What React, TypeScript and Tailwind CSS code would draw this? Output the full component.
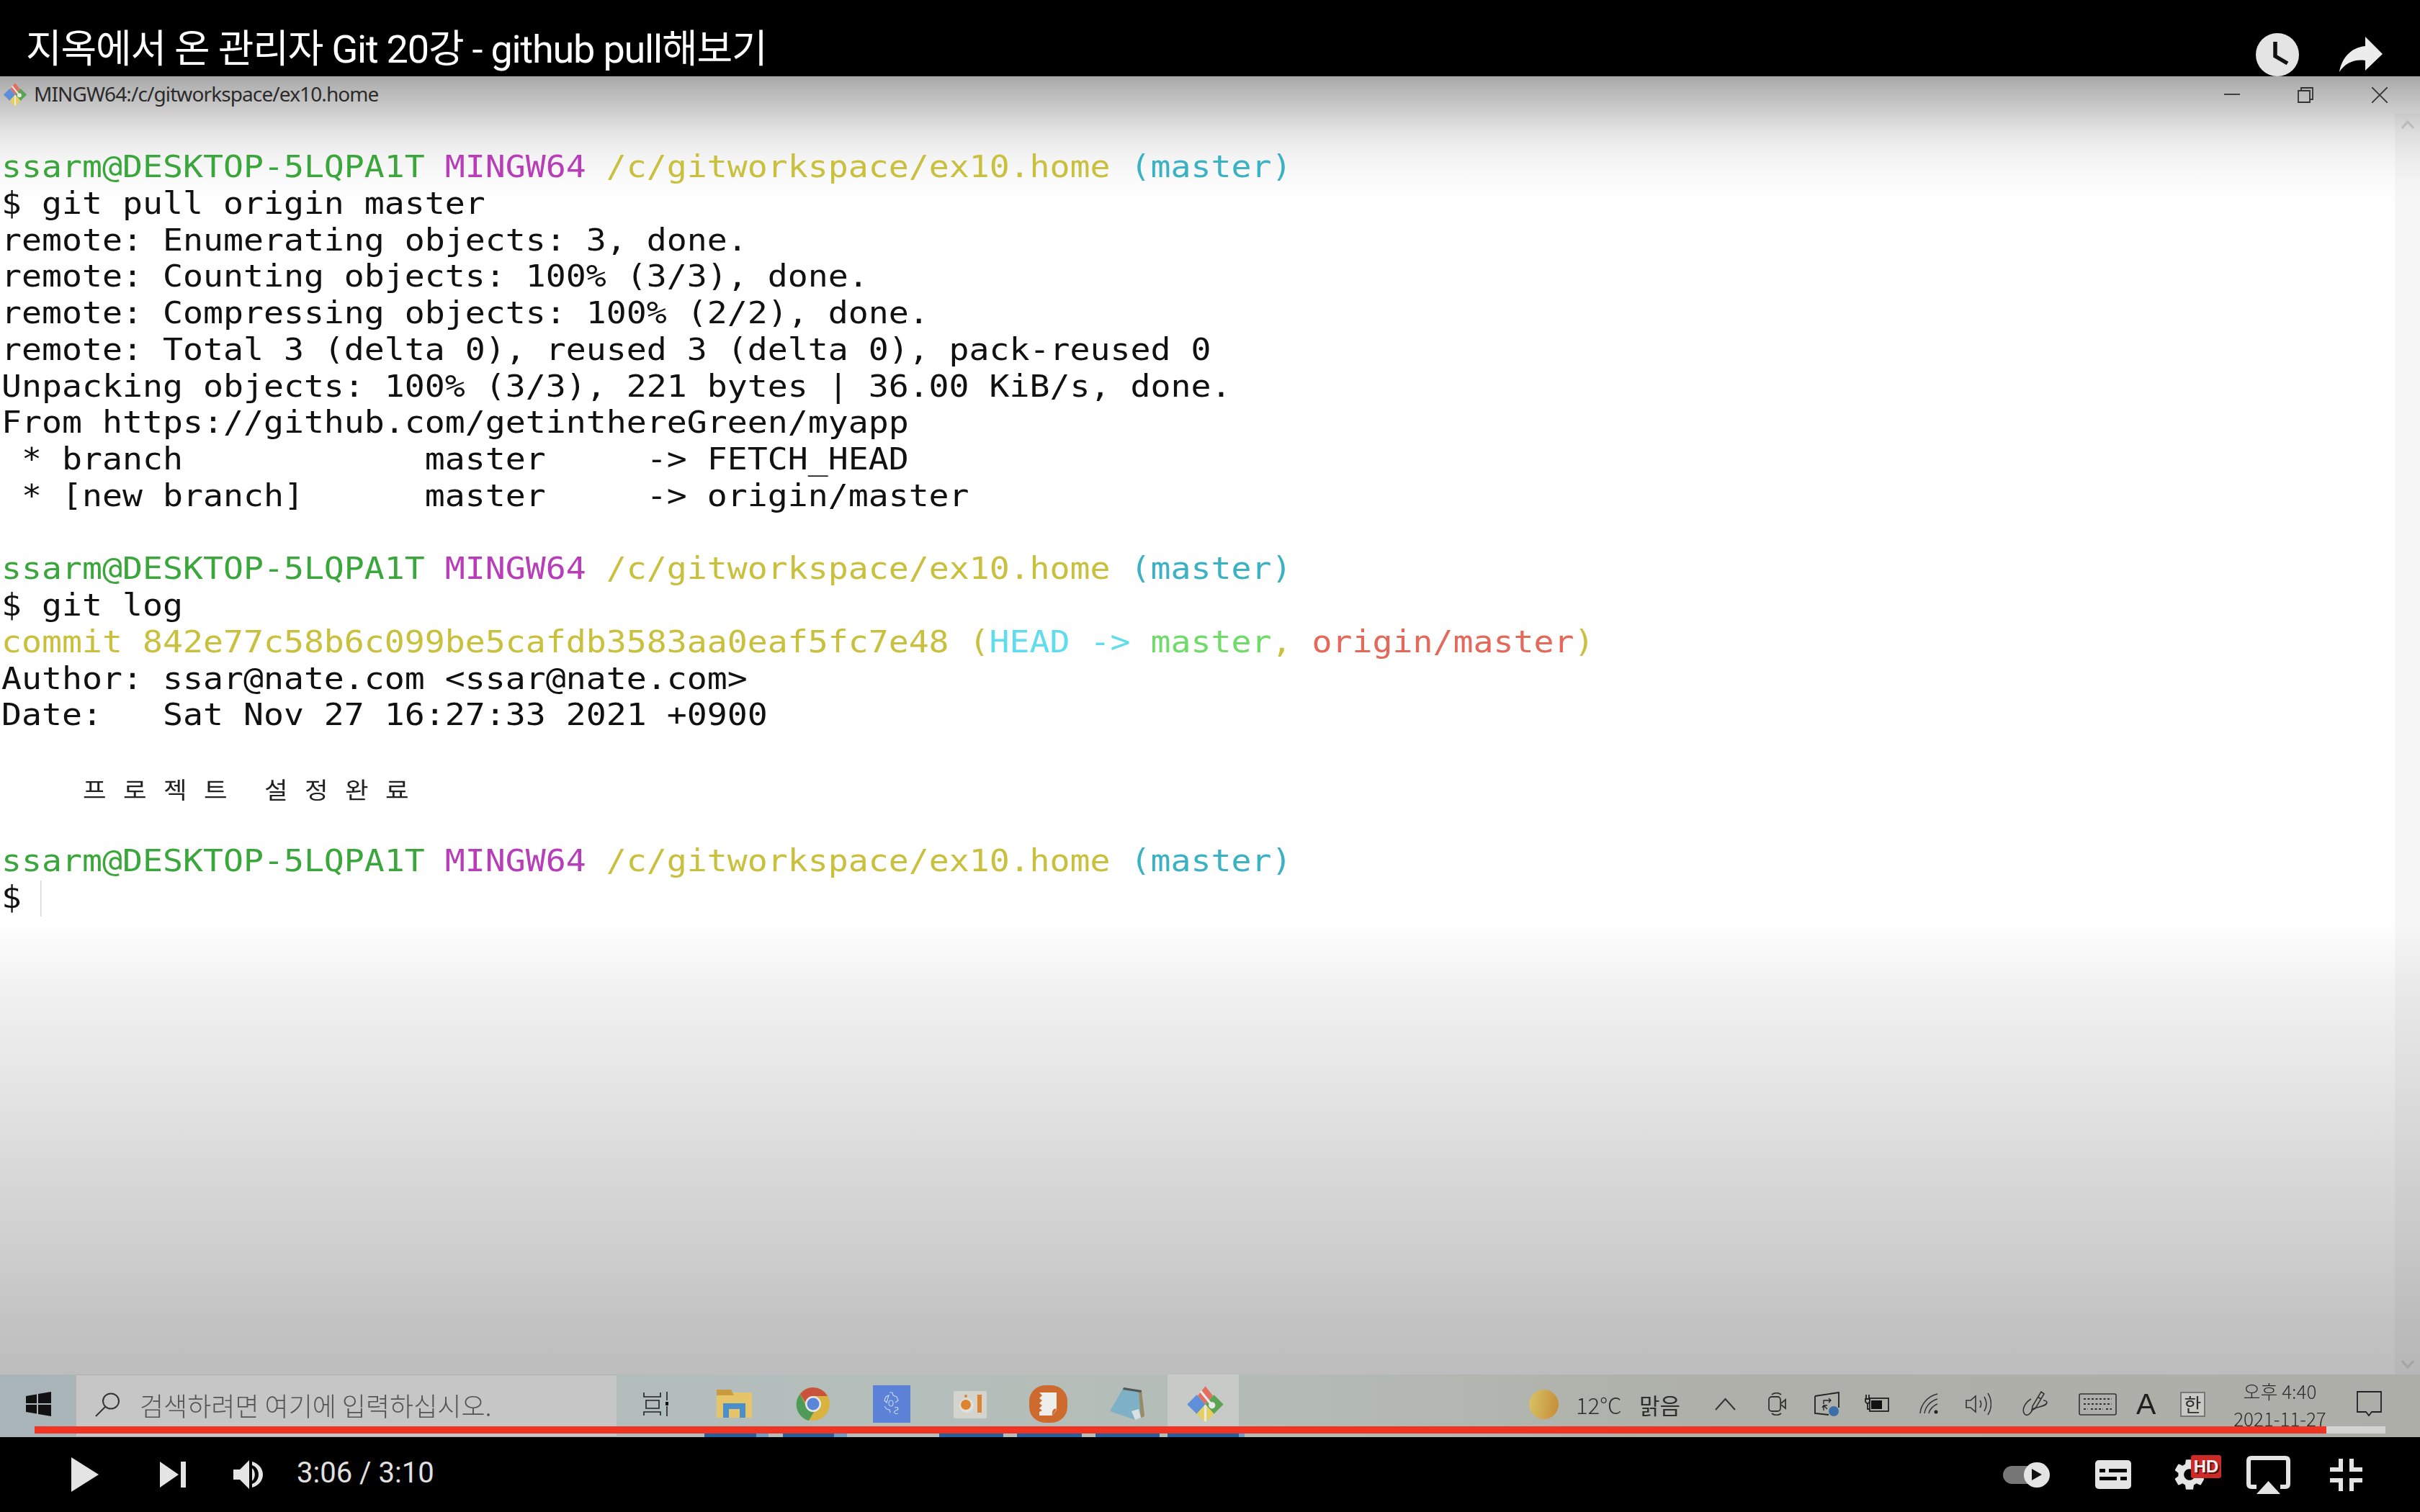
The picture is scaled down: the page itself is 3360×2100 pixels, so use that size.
const mono = "font-['DejaVu_Sans_Mono','Noto_Sans_CJK_KR',monospace]";

const GREEN = "text-[#3aa63c]";
const PURPLE = "text-[#b83db8]";
const YELLOW = "text-[#c9c03e]";
const CYAN = "text-[#3bb2c4]";

const Prompt = () => (
  <div className="h-[50.75px] whitespace-pre">
    <span className={GREEN}>ssarm@DESKTOP-5LQPA1T</span> <span className={PURPLE}>MINGW64</span>{" "}
    <span className={YELLOW}>/c/gitworkspace/ex10.home</span> <span className={CYAN}>(master)</span>
  </div>
);

const Line = ({ text }: { text: string }) => <div className="h-[50.75px] whitespace-pre">{text}</div>;

const GitLogo = ({ className }: { className: string }) => (
  <svg viewBox="0 0 40 40" className={className}>
    <path d="M20 1 L28 11 L20 20 L12 11 Z" fill="#e0705f" />
    <path d="M1 20 L11 10 L20 20 L11 30 Z" fill="#5f8fd8" />
    <path d="M39 20 L29 10 L20 20 L29 30 Z" fill="#5aa454" />
    <path d="M20 39 L29 30 L20 20 L11 30 Z" fill="#e6cf5c" />
    <path d="M15 6 L27 21 M20 21 L20 38" stroke="#e8e8e8" strokeWidth="2.5" fill="none" />
    <circle cx="27" cy="21" r="3.5" fill="#e8e8e8" />
  </svg>
);

const WinLogo = () => (
  <svg viewBox="0 0 35 34" className="w-[35px] h-[34px]" fill="#111">
    <path d="M0 6 L15 3.5 V16 H0 Z M17 3 L35 0 V16 H17 Z M0 18 H15 V30.5 L0 28 Z M17 18 H35 V34 L17 31 Z" />
  </svg>
);

const TaskView = () => (
  <svg viewBox="0 0 36 34" className="w-[36px] h-[34px]" fill="none" stroke="#222" strokeWidth="1.6">
    <path d="M1 1 V7 H24 V1 M4 12 H22 V23 H4 Z M1 33 V28 H24 V33 M33 0 V12 M33 20 V34" />
    <rect x="31" y="14" width="4" height="5" fill="#111" stroke="none" />
  </svg>
);

const Folder = () => (
  <svg viewBox="0 0 49 42" className="w-[49px] h-[42px]">
    <path d="M0 1 H18 L22 5 H49 V40 H0 Z" fill="#e6c56a" />
    <path d="M0 1 H20 L24 9 H0 Z" fill="#c99a3e" />
    <path d="M9 40 V20 H40 V40 H32 V28 H17 V40 Z" fill="#4a8fc9" />
  </svg>
);

const Chrome = () => (
  <svg viewBox="0 0 48 48" className="w-[48px] h-[48px]">
    <circle cx="24" cy="24" r="23" fill="#d9b23f" />
    <path d="M24 1 A23 23 0 0 1 44 13 H24 A11 11 0 0 0 13 22 L6 10 A23 23 0 0 1 24 1 Z" fill="#c9523d" />
    <path d="M6 10 L15 29 A11 11 0 0 0 25 35 L18 47 A23 23 0 0 1 6 10 Z" fill="#4f9a57" />
    <circle cx="24" cy="24" r="11" fill="#e4e8ea" />
    <circle cx="24" cy="24" r="8.5" fill="#5a86d8" />
  </svg>
);

const BlueGear = () => (
  <div className="w-[52px] h-[52px] bg-[#5b82d6] flex items-center justify-center">
    <svg viewBox="0 0 24 34" className="w-[24px] h-[34px]" fill="none" stroke="#c4d4f2" strokeWidth="1.2">
      <path d="M9 1 H13 L14 5 L19 7 L21 12 L17 15 M5 15 L2 12 L4 7 L8 5 Z" />
      <ellipse cx="11" cy="16" rx="3" ry="4" />
      <path d="M2 20 L5 24 L9 25 L10 29 M16 22 C22 20 22 25 18 26 C14 27 15 32 21 30" />
    </svg>
  </div>
);

const WhiteApp = () => (
  <svg viewBox="0 0 46 40" className="w-[46px] h-[40px]">
    <rect x="0" y="2" width="46" height="38" rx="2" fill="#d4d4cf" />
    <circle cx="18" cy="22" r="10" fill="#e0e0dc" />
    <circle cx="17" cy="21" r="7" fill="#dc8430" />
    <rect x="33" y="7" width="6" height="25" fill="#dc8430" />
    <circle cx="17" cy="9" r="2" fill="#dc8430" />
  </svg>
);

const OrangeApp = () => (
  <svg viewBox="0 0 53 52" className="w-[53px] h-[52px]">
    <rect width="53" height="52" rx="22" fill="#cf6a2e" />
    <path d="M14 10 H38 V34 L32 42 H14 V37 L18 35 L14 32 L18 28 L14 25 L18 21 L14 18 L18 14 Z" fill="#eeeeea" />
    <path d="M38 33 C34 31 31 36 32 42 Z" fill="#cf6a2e" />
  </svg>
);

const Notepad = () => (
  <svg viewBox="0 0 48 46" className="w-[48px] h-[46px]">
    <path d="M19 0 L44 4 L48 40 L35 45 L0 33 Z" fill="#7eb0c6" />
    <path d="M44 4 L48 40 L43 42 L40 6 Z" fill="#9c8a64" />
    <path d="M35 45 L43 42 L40 30 L30 33 Z" fill="#d8e0e2" />
    <path d="M19 0 L44 4 L43 7 L18 3 Z" fill="#555" />
  </svg>
);

const Search = () => (
  <svg viewBox="0 0 36 34" className="w-[36px] h-[34px]" fill="none" stroke="#333" strokeWidth="2">
    <ellipse cx="23" cy="12" rx="11" ry="10.5" />
    <path d="M15 20 L2 33" />
  </svg>
);

const tasks: { icon: React.ReactNode; lit?: boolean; bar?: [number, number, number] }[] = [
  { icon: <TaskView /> },
  { icon: <Folder />, bar: [13, 72, 17] },
  { icon: <Chrome />, bar: [13, 71, 18] },
  { icon: <BlueGear /> },
  { icon: <WhiteApp />, bar: [12, 89, 0] },
  { icon: <OrangeApp />, bar: [11, 90, 0] },
  { icon: <Notepad />, bar: [11, 89, 0] },
  { icon: <GitLogo className="w-[53px] h-[53px]" />, lit: true, bar: [2, 99, 8] },
];

const TaskSlot = ({ icon, lit, bar }: (typeof tasks)[number]) => (
  <div
    className={`w-[109px] flex flex-col ${
      lit ? "bg-[linear-gradient(to_right,transparent_2px,#c8cac8_2px,#c8cac8_101px,transparent_101px)]" : ""
    }`}
  >
    <div className="flex-1 flex items-center justify-center">{icon}</div>
    <div className="h-[5px] flex">
      {bar && (
        <>
          <div className="h-full bg-[#255f9e]" style={{ marginLeft: bar[0], width: bar[1] }} />
          <div className="h-full bg-[#6d9cc4]" style={{ width: bar[2] }} />
        </>
      )}
    </div>
  </div>
);

const Tray = () => (
  <div className="flex items-center h-[82px] ml-[395px] text-[#2e2e2c] font-['Noto_Sans_CJK_KR',sans-serif]">
    <div className="w-[41px] h-[41px] rounded-full bg-[linear-gradient(100deg,#d8c468,#c68a34)]" />
    <div className="ml-[24px] w-[65px] text-[31px] leading-none whitespace-nowrap font-light">12°C</div>
    <div className="ml-[23px] w-[59px] text-[31px] leading-none whitespace-nowrap">맑음</div>
    <svg viewBox="0 0 29 18" className="ml-[46px] w-[29px] h-[18px]" fill="none" stroke="#333" strokeWidth="2">
      <path d="M1 17 L14.5 2 L28 17" />
    </svg>
    <svg viewBox="0 0 25 32" className="ml-[45px] w-[25px] h-[32px]" fill="none" stroke="#333" strokeWidth="1.8">
      <path d="M5 3 C9 0 14 0 18 3 M5 29 C9 32 14 32 18 29" />
      <rect x="1" y="6" width="16" height="20" rx="4" />
      <path d="M18 15 L24 10 V22 L18 17" />
    </svg>
    <svg viewBox="0 0 35 34" className="ml-[39px] w-[35px] h-[34px]" fill="none" stroke="#222" strokeWidth="1.8">
      <path d="M1 6 L34 1 V22 M1 6 V30 L20 32" />
      <path d="M13 17 V12 H23 M20 9 L23 12 L20 15 M18 19 H13 V26 M11 22 L13 19 M13 19 L18 24" strokeWidth="1.3" />
      <circle cx="27" cy="27" r="7" fill="#3d6ea8" stroke="none" />
    </svg>
    <svg viewBox="0 0 35 26" className="ml-[35px] w-[35px] h-[26px]" fill="none" stroke="#222" strokeWidth="1.8">
      <rect x="7" y="5" width="26" height="18" />
      <rect x="9" y="8" width="15" height="12" fill="#111" stroke="none" />
      <path d="M2 0 V6 M6 0 V6 M1 6 H7 V10 L4 13 L1 10 Z M4 13 V20 H7" />
    </svg>
    <svg viewBox="0 0 26 30" className="ml-[41px] w-[26px] h-[30px]" fill="none" stroke="#333" strokeWidth="1.5">
      <path d="M1 28 C2 15 12 4 25 1 M7 28 C8 19 15 11 25 8 M13 28 C14 23 19 17 25 15" />
      <circle cx="23" cy="26" r="2.5" fill="#222" stroke="none" />
    </svg>
    <svg viewBox="0 0 36 32" className="ml-[38px] w-[36px] h-[32px]" fill="none" stroke="#333" strokeWidth="1.6">
      <path d="M1 11 H7 L14 5 V27 L7 21 H1 Z M20 11 C22 14 22 18 20 21 M26 6 C30 12 30 20 26 26 M31 1 C37 10 37 22 31 31" />
    </svg>
    <svg viewBox="0 0 36 36" className="ml-[42px] w-[36px] h-[36px]" fill="none" stroke="#333" strokeWidth="1.6">
      <path d="M27 1 L31 4 L19 24 L14 27 L15 21 Z M22 8 L27 11" />
      <path d="M13 11 C3 17 0 27 4 32 C8 36 14 30 15 25 C20 22 34 22 35 16 C35 14 32 13 30 13" />
    </svg>
    <svg viewBox="0 0 53 31" className="ml-[43px] w-[53px] h-[31px]" fill="none" stroke="#333" strokeWidth="1.6">
      <rect x="1" y="1" width="51" height="29" rx="2" />
      <path d="M7 8 H46 M7 15 H46 M7 22 H13 M17 22 H34 M38 22 H46" strokeDasharray="3 2.5" strokeWidth="2" />
    </svg>
    <div className="ml-[27px] w-[28px] text-[41px] leading-none font-['Liberation_Sans',sans-serif] text-[#1f1f1d]">A</div>
    <div className="ml-[33px] w-[35px] h-[35px] border-2 border-[#777] bg-[#c9c9c4] flex items-center justify-center text-[26px] leading-none">
      한
    </div>
    <div className="ml-[38px] w-[131px] flex flex-col items-center self-start pt-[8px]">
      <div className="text-[26px] leading-[30px] whitespace-nowrap font-light">오후 4:40</div>
      <div className="mt-[8px] text-[26px] leading-[30px] whitespace-nowrap font-light">2021-11-27</div>
    </div>
    <svg viewBox="0 0 35 36" className="ml-[41px] w-[35px] h-[36px]" fill="none" stroke="#222" strokeWidth="1.8">
      <path d="M1 1 H34 V29 H21 L17 34 L13 29 H1 Z" />
    </svg>
  </div>
);

const gearPath =
  "M19.14 12.94c.04-.3.06-.61.06-.94 0-.32-.02-.64-.07-.94l2.03-1.58c.18-.14.23-.41.12-.61l-1.92-3.32c-.12-.22-.37-.29-.59-.22l-2.39.96c-.5-.38-1.03-.7-1.62-.94l-.36-2.54c-.04-.24-.24-.41-.48-.41h-3.84c-.24 0-.43.17-.47.41l-.36 2.54c-.59.24-1.13.57-1.62.94l-2.39-.96c-.22-.08-.47 0-.59.22L2.74 8.87c-.12.21-.08.47.12.61l2.03 1.58c-.05.3-.09.63-.09.94s.02.64.07.94l-2.03 1.58c-.18.14-.23.41-.12.61l1.92 3.32c.12.22.37.29.59.22l2.39-.96c.5.38 1.03.7 1.62.94l.36 2.54c.05.24.24.41.48.41h3.84c.24 0 .44-.17.47-.41l.36-2.54c.59-.24 1.13-.56 1.62-.94l2.39.96c.22.08.47 0 .59-.22l1.92-3.32c.12-.22.07-.47-.12-.61l-2.01-1.58zM12 15.6c-1.98 0-3.6-1.62-3.6-3.6s1.62-3.6 3.6-3.6 3.6 1.62 3.6 3.6-1.62 3.6-3.6 3.6z";

export default function App() {
  return (
    <div className="w-[3360px] h-[2100px] flex flex-col overflow-hidden bg-black relative">
      {/* top bar */}
      <div className="h-[106px] flex items-start shrink-0">
        <div className="ml-[36px] mt-[37px] text-[54px] leading-[64px] text-white whitespace-nowrap font-['Roboto','Noto_Sans_CJK_KR',sans-serif] font-normal tracking-[-1.2px]">
          지옥에서 온 관리자 Git 20강 - github pull해보기
        </div>
        <div className="ml-auto mt-[46px] w-[60px] h-[60px] rounded-full bg-[#e4e4e4] flex items-center justify-center">
          <svg viewBox="0 0 60 60" className="w-[60px] h-[60px]" fill="none" stroke="#111" strokeWidth="5.5">
            <path d="M27 12 V32 L44 42" />
          </svg>
        </div>
        <svg viewBox="0 0 60 49" className="ml-[56px] mr-[52px] mt-[51px] w-[60px] h-[49px]" fill="#ececec">
          <path d="M36 0 L60 24 L36 47 V33 C20 31 8 37 0 49 C3 31 15 15 36 13 Z" />
        </svg>
      </div>

      {/* video: git bash window */}
      <div className="flex-1 flex flex-col min-h-0 bg-[linear-gradient(to_bottom,#a9a9a9_0px,#cacaca_44px,#e4e4e4_77px,#f3f3f3_111px,#fbfbfb_144px,#ffffff_177px,#ffffff_1172px,#f0f0f0_1277px,#e6e6e6_1392px,#dadada_1507px,#cfcfcf_1621px,#c2c2c2_1736px,#bdbdbd_1800px)]">
        <div className="h-[51px] flex items-center shrink-0">
          <GitLogo className="ml-[4px] w-[34px] h-[35px]" />
          <div className="ml-[9px] text-[28px] leading-none text-[#2b2b2b] whitespace-nowrap font-['Noto_Sans',sans-serif] tracking-[-0.9px] -translate-y-[2px]">
            MINGW64:/c/gitworkspace/ex10.home
          </div>
          <svg viewBox="0 0 22 22" className="ml-auto w-[22px] h-[22px]" fill="none" stroke="#333" strokeWidth="1.8">
            <path d="M0 10 H22" />
          </svg>
          <svg viewBox="0 0 22 22" className="ml-[80px] w-[22px] h-[22px]" fill="none" stroke="#333" strokeWidth="1.8">
            <path d="M5 5 V1 H21 V17 H17 M1 5 H17 V21 H1 Z" />
          </svg>
          <svg viewBox="0 0 22 22" className="ml-[81px] mr-[45px] w-[22px] h-[22px]" fill="none" stroke="#333" strokeWidth="1.8">
            <path d="M0 0 L22 22 M22 0 L0 22" />
          </svg>
        </div>

        <div className="flex-1 flex min-h-0">
          <div className={`flex-1 pt-[50px] pl-[2px] ${mono} text-[42px] leading-[50.75px] text-[#111]`}>
            <div className="origin-top-left scale-x-[1.107]">
              <Prompt />
              <Line text="$ git pull origin master" />
              <Line text="remote: Enumerating objects: 3, done." />
              <Line text="remote: Counting objects: 100% (3/3), done." />
              <Line text="remote: Compressing objects: 100% (2/2), done." />
              <Line text="remote: Total 3 (delta 0), reused 3 (delta 0), pack-reused 0" />
              <Line text="Unpacking objects: 100% (3/3), 221 bytes | 36.00 KiB/s, done." />
              <Line text="From https://github.com/getinthereGreen/myapp" />
              <Line text=" * branch            master     -> FETCH_HEAD" />
              <Line text=" * [new branch]      master     -> origin/master" />
              <Line text="" />
              <Prompt />
              <Line text="$ git log" />
              <div className={`h-[50.75px] whitespace-pre ${YELLOW}`}>
                commit 842e77c58b6c099be5cafdb3583aa0eaf5fc7e48 (
                <span className="text-[#5fdcee]">HEAD -&gt; </span>
                <span className="text-[#6fdc6a]">master</span>
                <span className="text-[#c9c03e]">, </span>
                <span className="text-[#e4695a]">origin/master</span>)
              </div>
              <Line text="Author: ssar@nate.com <ssar@nate.com>" />
              <Line text="Date:   Sat Nov 27 16:27:33 2021 +0900" />
              <Line text="" />
              <div className="h-[50.75px] flex pl-[102px] pt-[3px] text-[32px] text-[#222]">
                <span className="w-[50.6px]">프</span>
                <span className="w-[50.6px]">로</span>
                <span className="w-[50.6px]">젝</span>
                <span className="w-[75.9px]">트</span>
                <span className="w-[50.6px]">설</span>
                <span className="w-[50.6px]">정</span>
                <span className="w-[50.6px]">완</span>
                <span className="w-[50.6px]">료</span>
              </div>
              <Line text="" />
              <Prompt />
              <div className="h-[50.75px] flex">
                <span>$</span>
                <span className="ml-[24px] mt-[1px] w-px h-[50px] bg-[#c8c8c8]" />
              </div>
            </div>
          </div>
          <div className="w-[35px] flex flex-col justify-between items-center bg-black/[0.03] pb-[8px] pt-[10px]">
            <svg viewBox="0 0 18 12" className="w-[18px] h-[12px]" fill="none" stroke="#bbb" strokeWidth="3">
              <path d="M1 11 L9 2 L17 11" />
            </svg>
            <svg viewBox="0 0 18 12" className="w-[18px] h-[12px]" fill="none" stroke="#a4a4a4" strokeWidth="3">
              <path d="M1 1 L9 10 L17 1" />
            </svg>
          </div>
        </div>

        {/* windows taskbar */}
        <div className="h-[87px] shrink-0 flex bg-[linear-gradient(to_right,#a9b4b8,#b3bebc_30%,#b5bdb7_50%,#aeb0a9_70%,#adaea8)] blur-[0.5px]">
          <div className="w-[106px] flex items-center justify-center pb-[5px]">
            <WinLogo />
          </div>
          <div className="w-[750px] bg-[#c6c6c6] border-y border-[#adadad] flex items-center pb-[3px]">
            <div className="ml-[25px]">
              <Search />
            </div>
            <div className="ml-[27px] text-[36px] leading-none text-[#555] whitespace-nowrap font-['Noto_Sans_CJK_KR',sans-serif] font-light">
              검색하려면 여기에 입력하십시오.
            </div>
          </div>
          {tasks.map((t, i) => (
            <TaskSlot key={i} {...t} />
          ))}
          <Tray />
        </div>
      </div>

      {/* player controls */}
      <div className="h-[104px] shrink-0 flex items-center font-['Roboto',sans-serif]">
        <svg viewBox="0 0 38 48" className="ml-[99px] w-[38px] h-[48px]" fill="#e4e4e4">
          <path d="M0 0 L38 24 L0 48 Z" />
        </svg>
        <svg viewBox="0 0 36 36" className="ml-[85px] w-[36px] h-[36px]" fill="#e4e4e4">
          <path d="M0 0 L26 18 L0 36 Z M29 0 H36 V36 H29 Z" />
        </svg>
        <svg viewBox="0 0 43 40" className="ml-[66px] w-[43px] h-[40px]" fill="#e4e4e4">
          <path d="M0 13 H9 L22 0 V40 L9 27 H0 Z" />
          <path d="M26 11 C31 15 31 25 26 29 Z" />
          <path d="M26 2 C46 8 46 32 26 38 V33 C38 29 38 11 26 7 Z" />
        </svg>
        <div className="ml-[45px] -translate-y-[2px] text-[40px] leading-none text-[#e0e0e0] whitespace-nowrap">3:06 / 3:10</div>

        <div className="ml-auto relative w-[65px] h-[35px]">
          <div className="absolute left-0 top-[5px] w-[50px] h-[25px] rounded-full bg-[#777]" />
          <div className="absolute right-0 top-0 w-[36px] h-[35px] rounded-full bg-[#e4e4e4] flex items-center justify-center">
            <svg viewBox="0 0 14 16" className="w-[14px] h-[16px]" fill="#111">
              <path d="M0 0 L14 8 L0 16 Z" />
            </svg>
          </div>
        </div>
        <div className="ml-[63px] w-[50px] h-[40px] rounded-[5px] bg-[#e4e4e4] flex flex-col justify-center gap-[6px] px-[6px]">
          <div className="flex gap-[5px]">
            <div className="w-[8px] h-[5px] bg-black" />
            <div className="w-[25px] h-[5px] bg-black" />
          </div>
          <div className="flex gap-[5px]">
            <div className="w-[24px] h-[5px] bg-black" />
            <div className="w-[9px] h-[5px] bg-black" />
          </div>
        </div>
        <div className="ml-[55px] relative w-[70px] h-[52px]">
          <svg viewBox="0 0 24 24" className="absolute left-0 top-0 w-[52px] h-[52px]" fill="#e4e4e4">
            <path d={gearPath} />
          </svg>
          <div className="absolute right-0 top-[-1px] w-[42px] h-[32px] rounded-[3px] bg-[#cc2a26] text-[#eee] text-[24px] leading-[32px] text-center font-bold font-['Liberation_Sans',sans-serif] [text-shadow:2px_2px_0_#5c0e0c]">
            HD
          </div>
        </div>
        <svg viewBox="0 0 61 53" className="ml-[35px] w-[61px] h-[53px]" fill="none" stroke="#e4e4e4" strokeWidth="6">
          <path d="M14 43 H7 Q3 43 3 39 V7 Q3 3 7 3 H54 Q58 3 58 7 V39 Q58 43 54 43 H47" />
          <path d="M14 53 L30.5 35 L47 53 Z" fill="#e4e4e4" stroke="none" />
        </svg>
        <svg viewBox="0 0 45 45" className="ml-[55px] mr-[80px] w-[45px] h-[45px]" fill="none" stroke="#e4e4e4" strokeWidth="6">
          <path d="M15 0 V15 H0 M30 0 V15 H45 M0 30 H15 V45 M45 30 H30 V45" />
        </svg>
      </div>

      {/* progress bar */}
      <div className="absolute left-[48px] top-[1981px] w-[3264px] h-[10px] bg-[#d4d4d2]">
        <div className="h-full w-[3182px] bg-[#ee3524]" />
      </div>
    </div>
  );
}
